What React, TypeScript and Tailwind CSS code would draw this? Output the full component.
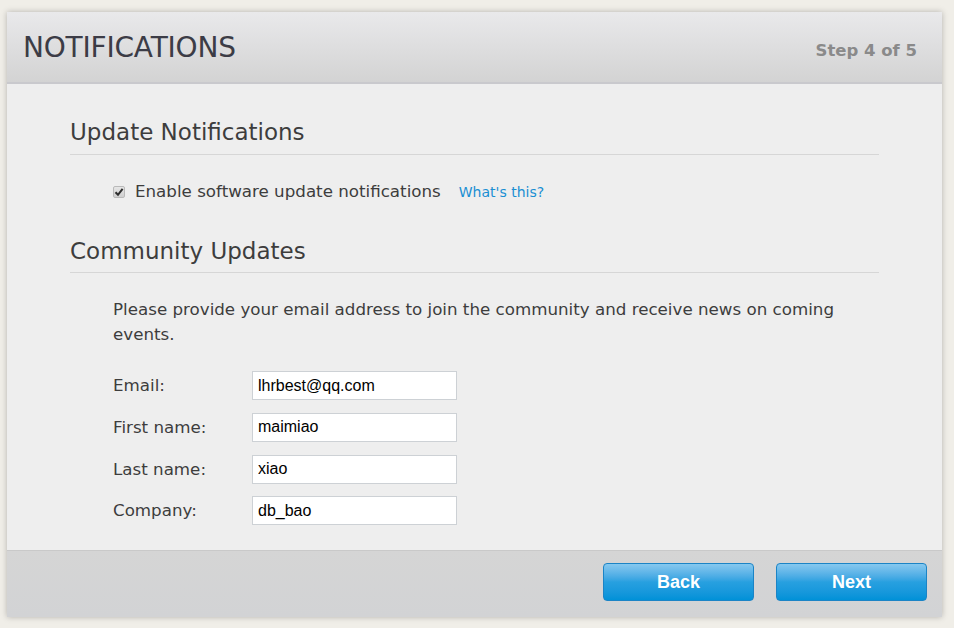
import { useState } from 'react';

const fields = [
    { label: "Email:", value: "lhrbest@qq.com" },
    { label: "First name:", value: "maimiao" },
    { label: "Last name:", value: "xiao" },
    { label: "Company:", value: "db_bao" },
];

const arial = { fontFamily: '"Liberation Sans", Arial, sans-serif' };

export default function App() {
    const [notify, setNotify] = useState(true);

    return (
        <div className="w-full h-[628px] bg-[#f0eee8] pt-[12px] pl-[7px]" style={{ fontFamily: '"DejaVu Sans", Verdana, sans-serif' }}>
            <div className="w-[935px] h-[605px] flex flex-col bg-[#eeeeee] shadow-[0_0_6px_rgba(0,0,0,0.25)]">
                {/* header */}
                <div className="h-[72px] shrink-0 flex items-center justify-between pl-[16px] pr-[25px] bg-gradient-to-b from-[#e9e9eb] to-[#d3d3d3] border-b-2 border-[#c9c9cd]">
                    <h1 className="text-[28px] text-[#3c3c46] tracking-[-0.2px] pt-[2px]">NOTIFICATIONS</h1>
                    <span className="text-[16.5px] font-bold text-[#8a8a8a] pt-[8px]">Step 4 of 5</span>
                </div>

                {/* body */}
                <div className="flex-1 px-[63px] pt-[35px] text-[#3d3d3d]">
                    <h2 className="text-[23px] leading-[27px] pb-[8px] border-b border-[#d6d6d6]">Update Notifications</h2>
                    <div className="flex items-center pl-[43px] mt-[27px] h-[20px]">
                        <span
                            role="checkbox"
                            aria-checked={notify}
                            onClick={() => setNotify(!notify)}
                            className="w-[12px] h-[12px] mr-[10px] flex items-center justify-center rounded-[2px] border border-[#b9b9b9] bg-gradient-to-b from-[#e6e6e6] to-[#cfcfcf] cursor-pointer"
                        >
                            {notify && (
                                <svg width="10" height="10" viewBox="0 0 10 10">
                                    <path d="M1.5 5.2 L4 7.8 L8.6 1.8" fill="none" stroke="#2e2e2e" strokeWidth="2" />
                                </svg>
                            )}
                        </span>
                        <span className="text-[16.7px]">Enable software update notifications</span>
                        <a href="#" className="ml-[18px] text-[14px] text-[#1a8fd3]">What's this?</a>
                    </div>

                    <h2 className="text-[23px] leading-[27px] pb-[7px] border-b border-[#d6d6d6] mt-[36px]">Community Updates</h2>
                    <p className="pl-[43px] mt-[24px] text-[16.7px] leading-[25px] pr-[20px]">
                        Please provide your email address to join the community and receive news on coming events.
                    </p>

                    <div className="pl-[43px] mt-[24px] flex flex-col gap-[12.8px]">
                        {fields.map((f) => (
                            <div key={f.label} className="flex items-center">
                                <label className="w-[139px] text-[16.7px]">{f.label}</label>
                                <input
                                    defaultValue={f.value}
                                    className="w-[205px] h-[29px] bg-white border border-[#cdd1d5] px-[5px] text-[16px] text-black outline-none"
                                    style={arial}
                                />
                            </div>
                        ))}
                    </div>
                </div>

                {/* footer */}
                <div className="h-[67px] shrink-0 flex items-start justify-end gap-[22px] pt-[12px] pr-[15px] bg-gradient-to-b from-[#d5d5d5] to-[#d2d3d5] border-t border-[#c9c9c9]">
                    <button className="w-[151px] h-[38px] rounded-[4px] border border-[#1b84c6] bg-gradient-to-b from-[#86c8ef] via-[#27a0e0] to-[#0091d8] text-white text-[18px] font-bold" style={arial}>Back</button>
                    <button className="w-[151px] h-[38px] rounded-[4px] border border-[#1b84c6] bg-gradient-to-b from-[#86c8ef] via-[#27a0e0] to-[#0091d8] text-white text-[18px] font-bold" style={arial}>Next</button>
                </div>
            </div>
        </div>
    );
}
